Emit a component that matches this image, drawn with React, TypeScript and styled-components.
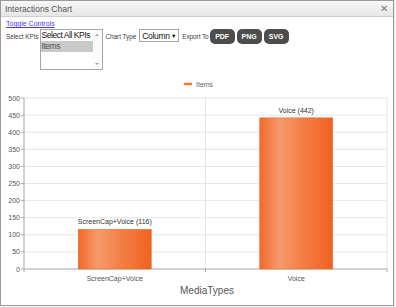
import styled, { createGlobalStyle } from "styled-components";

const GlobalStyle = createGlobalStyle`
  html, body {
    margin: 0;
    padding: 0;
    background: #ffffff;
    font-family: "Liberation Sans", Arial, sans-serif;
  }
`;

const Dialog = styled.div`
  width: 392px;
  height: 304px;
  border: 1px solid #9a9a9a;
  background: #fff;
  display: flex;
  flex-direction: column;
  box-shadow: 0 0 2px rgba(0, 0, 0, 0.25);
`;

const TitleBar = styled.div`
  height: 15px;
  display: flex;
  align-items: center;
  justify-content: space-between;
  padding: 0 5px 0 4px;
  background: linear-gradient(#f8f8f8, #e6e6e6);
  border-bottom: 1px solid #cfcfcf;
  font-size: 8.5px;
  color: #555;
`;

const CloseButton = styled.span`
  font-size: 10px;
  color: #777;
  line-height: 1;
`;

const Controls = styled.div`
  padding: 2px 5px 0;
  display: flex;
  flex-direction: column;
`;

const ToggleLink = styled.a`
  font-size: 7px;
  color: #4a3cf0;
  text-decoration: underline;
  line-height: 9px;
  align-self: flex-start;
`;

const ControlRow = styled.div`
  display: flex;
  align-items: flex-start;
  margin-top: 1px;
`;

const Label = styled.span`
  font-size: 6.5px;
  letter-spacing: -0.1px;
  color: #444;
  margin-top: 4px;
  white-space: nowrap;
`;

const ListBox = styled.div`
  width: 61px;
  height: 39px;
  border: 1px solid #a6a6a6;
  display: flex;
  background: #fff;
  overflow: hidden;
  margin: 0 3px 0 1px;
`;

const Options = styled.div`
  flex: 1;
  min-width: 0;
  display: flex;
  flex-direction: column;
`;

const Option = styled.div<{ $selected?: boolean }>`
  font-size: 8.5px;
  letter-spacing: -0.45px;
  line-height: 11px;
  padding-left: 1px;
  white-space: nowrap;
  overflow: hidden;
  color: ${({ $selected }) => ($selected ? "#555" : "#111")};
  background: ${({ $selected }) => ($selected ? "#c9c9c9" : "transparent")};
`;

const ScrollTrack = styled.div`
  width: 9px;
  flex-shrink: 0;
  display: flex;
  flex-direction: column;
  justify-content: space-between;
  align-items: center;
  padding: 4px 0;
  background: #fbfbfb;
`;

const Arrow = styled.span<{ $down?: boolean }>`
  width: 0;
  height: 0;
  border-left: 2px solid transparent;
  border-right: 2px solid transparent;
  ${({ $down }) =>
    $down ? "border-top: 2px solid #a0a0a0;" : "border-bottom: 2px solid #a0a0a0;"}
`;

const SelectBox = styled.div`
  width: 34px;
  height: 11px;
  border: 1px solid #a6a6a6;
  display: flex;
  align-items: center;
  justify-content: space-between;
  padding: 0 2px;
  font-size: 8.5px;
  letter-spacing: -0.3px;
  color: #111;
  margin: 0 3px 0 3px;
  box-sizing: content-box;
  white-space: nowrap;
`;

const Caret = styled.span`
  font-size: 5.5px;
  color: #000;
`;

const ButtonGroup = styled.div`
  display: flex;
  gap: 2px;
  margin-left: 1px;
`;

const ExportButton = styled.button`
  height: 15px;
  padding: 0;
  width: 25px;
  border: none;
  border-radius: 5px;
  background: #4d4d4d;
  color: #fff;
  font-family: "Liberation Sans", Arial, sans-serif;
  font-weight: bold;
  font-size: 7px;
  cursor: pointer;
`;

const ChartSvg = styled.svg`
  display: block;
  margin-top: 2px;
`;

const data = [
  { name: "ScreenCap+Voice", value: 116 },
  { name: "Voice", value: 442 },
];

const PLOT = { left: 24, right: 387, top: 98, bottom: 269 };
const scale = (PLOT.bottom - PLOT.top) / 500;

const Chart = () => {
  const ticks = [0, 50, 100, 150, 200, 250, 300, 350, 400, 450, 500];
  const catWidth = (PLOT.right - PLOT.left) / data.length;
  const barWidth = 73;

  return (
    <ChartSvg width={392} height={232} viewBox="1 72 392 232">
      <defs>
        <linearGradient id="barFill" x1="0" x2="1" y1="0" y2="0">
          <stop offset="0" stopColor="#f2692a" />
          <stop offset="0.27" stopColor="#f59a6c" />
          <stop offset="0.6" stopColor="#f37e44" />
          <stop offset="1" stopColor="#f26220" />
        </linearGradient>
      </defs>

      <line x1={184} x2={192} y1={84} y2={84} stroke="#f47a3c" strokeWidth={2.5} />
      <text x={196} y={86.5} fontSize={7} fill="#666">
        Items
      </text>

      {ticks.map((t) => {
        const y = PLOT.bottom - t * scale;
        return (
          <g key={t}>
            {t > 0 && (
              <line x1={PLOT.left} x2={PLOT.right} y1={y} y2={y} stroke="#e6e6e6" strokeWidth={1} />
            )}
            <line x1={PLOT.left - 3} x2={PLOT.left} y1={y} y2={y} stroke="#aaa" strokeWidth={1} />
            <text x={20} y={y + 2.5} fontSize={7} fill="#555" textAnchor="end">
              {t}
            </text>
          </g>
        );
      })}

      {[1, 2].map((i) => {
        const x = PLOT.left + catWidth * i;
        return (
          <line key={i} x1={x} x2={x} y1={PLOT.top} y2={PLOT.bottom} stroke="#e6e6e6" strokeWidth={1} />
        );
      })}

      <line x1={PLOT.left} x2={PLOT.left} y1={PLOT.top} y2={PLOT.bottom} stroke="#a8a8a8" strokeWidth={1} />
      <line x1={PLOT.left} x2={PLOT.right} y1={PLOT.bottom} y2={PLOT.bottom} stroke="#a8a8a8" strokeWidth={1} />
      {[0, 1, 2].map((i) => {
        const x = PLOT.left + catWidth * i;
        return <line key={i} x1={x} x2={x} y1={PLOT.bottom} y2={PLOT.bottom + 3} stroke="#a8a8a8" />;
      })}

      {data.map((d, i) => {
        const cx = PLOT.left + catWidth * (i + 0.5);
        const h = d.value * scale;
        const y = PLOT.bottom - h;
        return (
          <g key={d.name}>
            <rect
              x={cx - barWidth / 2}
              y={y}
              width={barWidth}
              height={h}
              fill="url(#barFill)"
              stroke="#e8642a"
              strokeWidth={0.5}
            />
            <text x={cx} y={y - 5} fontSize={7} fill="#333" textAnchor="middle">
              {`${d.name} (${d.value})`}
            </text>
            <text x={cx} y={281} fontSize={7} fill="#555" textAnchor="middle">
              {d.name}
            </text>
          </g>
        );
      })}

      <text x={207} y={293.5} fontSize={10} fill="#555" textAnchor="middle">
        MediaTypes
      </text>
    </ChartSvg>
  );
};

export default function App() {
  return (
    <>
      <GlobalStyle />
      <Dialog>
        <TitleBar>
          <span>Interactions Chart</span>
          <CloseButton>✕</CloseButton>
        </TitleBar>
        <Controls>
          <ToggleLink href="#">Toggle Controls</ToggleLink>
          <ControlRow>
            <Label>Select KPIs</Label>
            <ListBox>
              <Options>
                <Option>Select All KPIs</Option>
                <Option $selected>Items</Option>
              </Options>
              <ScrollTrack>
                <Arrow />
                <Arrow $down />
              </ScrollTrack>
            </ListBox>
            <Label>Chart Type</Label>
            <SelectBox>
              Column <Caret>▼</Caret>
            </SelectBox>
            <Label>Export To</Label>
            <ButtonGroup>
              <ExportButton>PDF</ExportButton>
              <ExportButton>PNG</ExportButton>
              <ExportButton>SVG</ExportButton>
            </ButtonGroup>
          </ControlRow>
        </Controls>
        <Chart />
      </Dialog>
    </>
  );
}
